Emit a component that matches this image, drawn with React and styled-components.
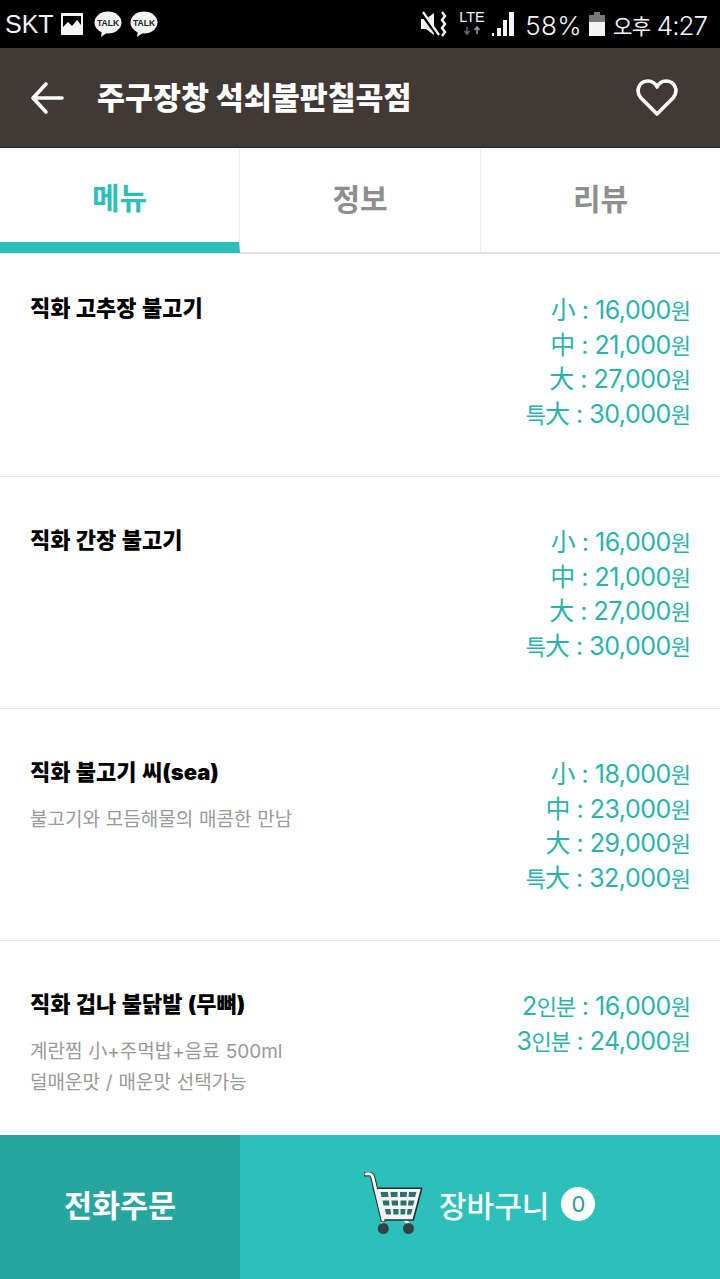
import React from "react";
import styled, { createGlobalStyle } from "styled-components";

const GlobalStyle = createGlobalStyle`
  html, body { margin: 0; padding: 0; background: #fff; }
  * { box-sizing: border-box; }
  body { font-family: "Noto Sans CJK KR", "Noto Sans", sans-serif; }
`;

const Page = styled.div`
  width: 720px;
  height: 1279px;
  display: flex;
  flex-direction: column;
  overflow: hidden;
`;

const StatusBar = styled.div`
  height: 48px;
  background: #000;
  color: #f4f4f4;
  display: flex;
  align-items: center;
  justify-content: space-between;
  padding: 0 13px 0 5px;
  font-family: "Liberation Sans", sans-serif;
`;

const StatusGroup = styled.div`
  display: flex;
  align-items: center;
`;

const Carrier = styled.span`
  font-size: 25px;
  margin-right: 6px;
`;

const TalkBubble = styled.svg`
  width: 28px;
  height: 26px;
  margin-left: ${(p) => p.$gap}px;
`;

const StatusIcon = styled.span`
  display: flex;
  margin-left: ${(p) => p.$gap}px;
`;

const StatusText = styled.span`
  font-family: "Inter", sans-serif;
  font-size: 26px;
  font-weight: 300;
  margin-left: ${(p) => p.$gap}px;
  margin-top: 3px;
  line-height: 1;
  letter-spacing: ${(p) => p.$spacing}px;
`;

const StatusAmPm = styled(StatusText)`
  font-family: "Noto Sans CJK KR", sans-serif;
  font-size: 21px;
  font-weight: 400;
  margin-top: 2px;
`;

const Header = styled.header`
  height: 100px;
  background: #413936;
  border-bottom: 1px solid #2e2a28;
  display: flex;
  align-items: center;
  padding: 0 42px 0 30px;
  color: #fff;
`;

const HeaderTitle = styled.h1`
  flex: 1;
  margin: 0 0 2px 33px;
  font-size: 30.4px;
  font-weight: 900;
  line-height: 1;
  white-space: nowrap;
`;

const Tabs = styled.nav`
  height: 106px;
  display: flex;
  border-bottom: 2px solid #e3e3e3;
`;

const Tab = styled.div`
  width: 240px;
  height: ${(p) => (p.$active ? "105px" : "104px")};
  display: flex;
  align-items: center;
  justify-content: center;
  padding: ${(p) => (p.$active ? "2px 0 0" : "0 0 6px")};
  font-size: 30px;
  font-weight: 700;
  color: ${(p) => (p.$active ? "#2bbfb9" : "#8e8e8e")};
  border-right: 1px solid #ececec;
  border-bottom: ${(p) => (p.$active ? "11px solid #2bbfb9" : "none")};
  &:nth-child(2) { width: 241px; }
  &:last-child { border-right: none; width: 239px; }
`;

const MenuList = styled.main`
  flex: 1;
  min-height: 0;
`;

const MenuRow = styled.section`
  height: ${(p) => p.$h}px;
  display: flex;
  justify-content: space-between;
  padding: 45px 30px 0;
  border-bottom: 1px solid #e6e6e6;
  &:first-child { padding-top: 36px; }
  &:last-child { border-bottom: none; }
`;

const MenuInfo = styled.div`
  display: flex;
  flex-direction: column;
`;

const MenuName = styled.h2`
  margin: 0;
  font-family: "Inter", "Noto Sans CJK KR", sans-serif;
  font-size: 22px;
  line-height: 36px;
  font-weight: 900;
  word-spacing: 1px;
  color: #000;
`;

const MenuDesc = styled.p`
  margin: 14px 0 0;
  font-family: "Inter", "Noto Sans CJK KR", sans-serif;
  font-size: 19px;
  line-height: 31px;
  font-weight: 400;
  word-spacing: 0.5px;
  color: #999;
  white-space: pre-line;
`;

const Prices = styled.div`
  margin-top: 3px;
  text-align: right;
  font-family: "Inter", "Noto Sans CJK KR", sans-serif;
  font-size: 25px;
  font-weight: 400;
  letter-spacing: -0.5px;
  color: #2ab3ac;
`;

const PriceRow = styled.div`
  height: 34.6px;
  line-height: 34.6px;
`;

const Hangul = styled.span`
  font-size: 22px;
  line-height: 1;
  letter-spacing: -1px;
`;

const Footer = styled.footer`
  height: 144px;
  display: flex;
  color: #fff;
`;

const PhoneOrder = styled.div`
  width: 240px;
  background: #26a69f;
  display: flex;
  align-items: center;
  justify-content: center;
  font-size: 30.5px;
  font-weight: 700;
  padding-bottom: 7px;
`;

const CartButton = styled.div`
  flex: 1;
  background: #2bc0ba;
  display: flex;
  align-items: center;
  padding: 0 0 6px 124px;
  font-size: 30px;
  font-weight: 500;
`;

const CartLabel = styled.span`
  margin-left: 15px;
`;

const CartBadge = styled.span`
  width: 34px;
  height: 34px;
  border-radius: 50%;
  background: #fff;
  color: #2a9c97;
  margin-left: 12px;
  display: flex;
  align-items: center;
  justify-content: center;
  font-size: 22px;
  font-weight: 400;
  font-family: "Inter", sans-serif;
`;

const items = [
  { name: "직화 고추장 불고기", h: 223, prices: ["小 : 16,000원", "中 : 21,000원", "大 : 27,000원", "특大 : 30,000원"] },
  { name: "직화 간장 불고기", h: 232, prices: ["小 : 16,000원", "中 : 21,000원", "大 : 27,000원", "특大 : 30,000원"] },
  { name: "직화 불고기 씨(sea)", h: 232, desc: "불고기와 모듬해물의 매콤한 만남", prices: ["小 : 18,000원", "中 : 23,000원", "大 : 29,000원", "특大 : 32,000원"] },
  { name: "직화 겁나 불닭발 (무뼈)", h: 194, desc: "계란찜 小+주먹밥+음료 500ml\n덜매운맛 / 매운맛 선택가능", prices: ["2인분 : 16,000원", "3인분 : 24,000원"] },
];

function ImageIcon() {
  return (
    <svg width="24" height="24" viewBox="0 0 24 24">
      <path fill="#f4f4f4" fillRule="evenodd" d="M2 1h20a1 1 0 0 1 1 1v20a1 1 0 0 1-1 1H2a1 1 0 0 1-1-1V2a1 1 0 0 1 1-1zm1 3v11l5-5 4 4 5-6 4 5V4z" />
    </svg>
  );
}

function Talk({ gap }) {
  return (
    <TalkBubble $gap={gap} viewBox="0 0 28 26">
      <ellipse cx="14" cy="11.5" rx="13.5" ry="11" fill="#f4f4f4" />
      <path d="M8 19l-1 7 7-5z" fill="#f4f4f4" />
      <text x="14" y="14.5" textAnchor="middle" fontSize="8.5" fontWeight="700" fontFamily="Liberation Sans, sans-serif" fill="#222">TALK</text>
    </TalkBubble>
  );
}

function MuteIcon() {
  return (
    <svg width="28" height="28" viewBox="0 0 28 28">
      <path fill="#f4f4f4" d="M1 9h5l8-6v22l-8-6H1z" />
      <path stroke="#000" strokeWidth="3" d="M1 3l17 23" />
      <path stroke="#f4f4f4" strokeWidth="2.2" d="M3 2l16 23" />
      <path fill="none" stroke="#f4f4f4" strokeWidth="2.4" d="M22 2l3 4-3 4 3 4-3 4 3 4-3 4" />
    </svg>
  );
}

function LteIcon() {
  return (
    <svg width="28" height="30" viewBox="0 0 28 30">
      <text x="14" y="13" textAnchor="middle" fontSize="14.5" fontFamily="Liberation Sans, sans-serif" fill="#f4f4f4">LTE</text>
      <path d="M9 18v6M6.500 22l2.500 3 2.500-3" stroke="#666" strokeWidth="1.6" fill="none" />
      <path d="M19 25v-6M16.500 21l2.500-3 2.500 3" stroke="#999" strokeWidth="1.6" fill="none" />
    </svg>
  );
}

function SignalIcon() {
  return (
    <svg width="24" height="26" viewBox="0 0 24 26">
      <path fill="#f4f4f4" d="M1 22h2v3H1zM6 17h4v8H6zM12 9h4v16h-4zM18 1h5v24h-5z" />
    </svg>
  );
}

function BatteryIcon() {
  return (
    <svg width="16" height="24" viewBox="0 0 16 24">
      <path fill="#777" d="M5 0h6v3h5v9H0V3h5z" />
      <path fill="#f4f4f4" d="M0 10h16v14H0z" />
    </svg>
  );
}

function ArrowIcon() {
  return (
    <svg width="34" height="34" viewBox="0 0 34 34" fill="none" stroke="#fff" strokeWidth="3.600" strokeLinecap="round" strokeLinejoin="round">
      <path d="M32 17H3M16 3L3 17l13 14" />
    </svg>
  );
}

function HeartIcon() {
  return (
    <svg width="42" height="38" viewBox="0 0 42 38" fill="none" stroke="#fff" strokeWidth="3.600" strokeLinejoin="round">
      <path d="M21 35L5 19C-1 12 3 2 12 2c4 0 7 2 9 6 2-4 5-6 9-6 9 0 13 10 7 17z" />
    </svg>
  );
}

function CartIcon() {
  return (
    <svg width="60" height="64" viewBox="0 0 60 64">
      <path d="M20 48c-2 2-3 4-1 8M40 48c3 1 5 4 5 8" fill="none" stroke="#f1f5f3" strokeWidth="2.600" />
      <path d="M2 2c4-1 6 0 7 4l10 42" fill="none" stroke="#22302f" strokeWidth="5" strokeLinecap="round" />
      <path d="M9.300 16.300H57.700L49.300 48H19.300z" fill="#f1f5f3" stroke="#22302f" strokeWidth="1.600" strokeLinejoin="round" />
      <path d="M2 2c4-1 6 0 7 4l10 42" fill="none" stroke="#f1f5f3" strokeWidth="3" strokeLinecap="round" />
      <g fill="#2f6f6c">
        <path d="M16.500 20h7.500l.5 5h-7zM26.500 20h7v5h-6.500zM36 20h7l-.5 5H36zM45 20h7.500l-1.500 5h-6.500z" />
        <path d="M18.500 28.500h6.500l.5 5h-6zM27.500 28.500h6.500v5h-6zM36.500 28.500h6v5h-6zM44.500 28.500h6l-1.500 5h-5z" />
        <path d="M21 37h5.500l.5 5.500h-5zM29 37h5.500v5.500H29.500zM36.500 37h5l-.5 5.500h-4.500zM43.500 37h5l-1.500 5.500h-4z" />
      </g>
      <circle cx="19.300" cy="56.500" r="5.500" fill="#2f4543" />
      <circle cx="44.500" cy="56.500" r="5.500" fill="#2f4543" />
    </svg>
  );
}

function PriceLine({ text }) {
  return (
    <PriceRow>
      {text.split(/([가-힣]+)/).map((part, i) =>
        /[가-힣]/.test(part) ? <Hangul key={i}>{part}</Hangul> : part
      )}
    </PriceRow>
  );
}

export default function App() {
  return (
    <Page>
      <GlobalStyle />
      <StatusBar>
        <StatusGroup>
          <Carrier>SKT</Carrier>
          <ImageIcon />
          <Talk gap={10} />
          <Talk gap={8} />
        </StatusGroup>
        <StatusGroup>
          <MuteIcon />
          <StatusIcon $gap={10}><LteIcon /></StatusIcon>
          <StatusIcon $gap={5}><SignalIcon /></StatusIcon>
          <StatusText $gap={10} $spacing={0.3}>58%</StatusText>
          <StatusIcon $gap={7}><BatteryIcon /></StatusIcon>
          <StatusAmPm $gap={8} $spacing={-0.4}>오후</StatusAmPm>
          <StatusText $gap={6} $spacing={-1}>4:27</StatusText>
        </StatusGroup>
      </StatusBar>
      <Header>
        <ArrowIcon />
        <HeaderTitle>주구장창 석쇠불판칠곡점</HeaderTitle>
        <HeartIcon />
      </Header>
      <Tabs>
        <Tab $active>메뉴</Tab>
        <Tab>정보</Tab>
        <Tab>리뷰</Tab>
      </Tabs>
      <MenuList>
        {items.map((item) => (
          <MenuRow key={item.name} $h={item.h}>
            <MenuInfo>
              <MenuName>{item.name}</MenuName>
              {item.desc && <MenuDesc>{item.desc}</MenuDesc>}
            </MenuInfo>
            <Prices>
              {item.prices.map((price) => (
                <PriceLine key={price} text={price} />
              ))}
            </Prices>
          </MenuRow>
        ))}
      </MenuList>
      <Footer>
        <PhoneOrder>전화주문</PhoneOrder>
        <CartButton>
          <CartIcon />
          <CartLabel>장바구니</CartLabel>
          <CartBadge>0</CartBadge>
        </CartButton>
      </Footer>
    </Page>
  );
}
